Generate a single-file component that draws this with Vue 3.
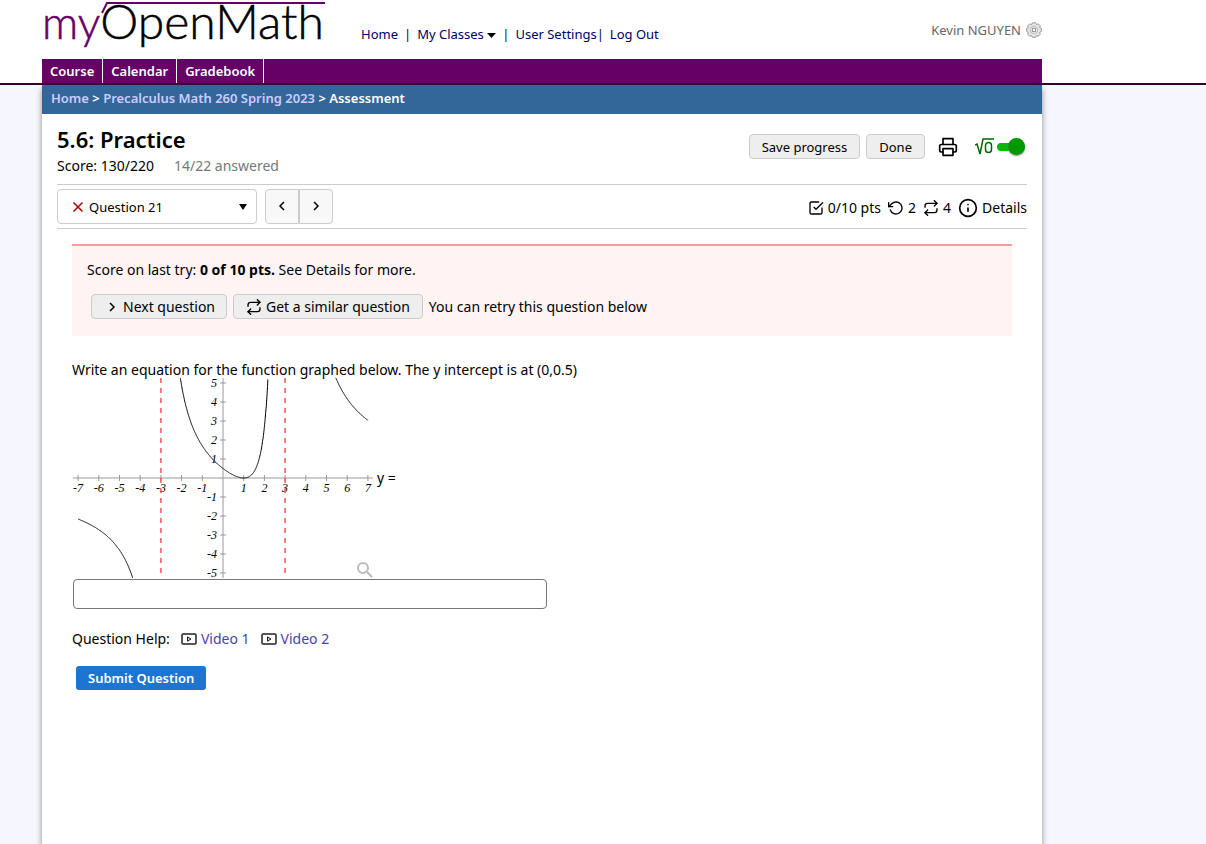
<script setup>
import { ref } from 'vue'

const tabs = ['Course', 'Calendar', 'Gradebook']
const question = ref('Question 21')
const answer = ref('')
const mathInput = ref(true)

const W = 300
const H = 200
const ux = 20.7
const uy = 19
const sx = (x) => W / 2 + x * ux
const sy = (y) => H / 2 - y * uy
const f = (x) => (13.5 * (x - 1) ** 2) / ((x + 3) * (x - 3) ** 2)

function trace(from, to) {
  const pts = []
  for (let x = from; x <= to + 0.001; x += 0.01) {
    const y = f(x)
    if (Math.abs(y) < 5.28) pts.push(`${sx(x).toFixed(1)},${sy(y).toFixed(1)}`)
  }
  return pts.join(' ')
}
const curves = [trace(-7, -3.1), trace(-2.9, 2.9), trace(3.1, 7)]
const xTicks = [-7, -6, -5, -4, -3, -2, -1, 1, 2, 3, 4, 5, 6, 7]
const yTicks = [5, 4, 3, 2, 1, -1, -2, -3, -4, -5]
</script>

<template>
  <div class="page">
    <header class="top">
      <div class="wrap head">
        <svg class="logo" width="290" height="52" viewBox="0 0 290 52" role="img" aria-label="myOpenMath">
          <text x="0" y="39"><tspan class="my">my</tspan><tspan class="om">OpenMath</tspan></text>
          <path d="M60 13 L65 3 H283" fill="none" stroke="#606" stroke-width="2" />
        </svg>
        <nav class="links" aria-label="Site">
          <a href="#">Home</a><span>|</span>
          <a href="#">My Classes <svg width="9" height="5" viewBox="0 0 9 5"><path d="M0 0h9L4.500 5z" fill="#000" /></svg></a><span>|</span>
          <a href="#">User Settings</a><span class="tight">|</span>
          <a href="#">Log Out</a>
        </nav>
        <div class="user">
          <span>Kevin NGUYEN</span>
          <svg width="16" height="16" viewBox="0 0 16 16" fill="none" stroke="#999">
            <path d="M6.500.8h3l.8 1.700 2-.6 1.900 1.900-.5 1.900 1.700.9v2.800l-1.700.9.5 2-1.900 1.900-2-.5-.8 1.600h-3l-.8-1.600-2 .5-1.900-1.900.5-2L.6 9.400V6.600l1.700-.9-.5-1.900 1.900-1.900 2 .6z" fill="#e6e6e6" />
            <circle cx="8" cy="8" r="3.800" stroke="#bbb" />
            <rect x="6.500" y="6.500" width="3" height="3" fill="#fff" />
          </svg>
        </div>
      </div>
      <nav class="wrap tabs" aria-label="Course"><a v-for="t in tabs" :key="t" href="#">{{ t }}</a></nav>
    </header>

    <main class="wrap body">
      <nav class="crumbs" aria-label="Breadcrumb">
        <a href="#">Home</a> &gt; <a href="#">Precalculus Math 260 Spring 2023</a> &gt; <span>Assessment</span>
      </nav>

      <div class="content">
        <section class="title">
          <div>
            <h1>5.6: Practice</h1>
            <p class="score"><span>Score: 130/220</span><span class="dim">14/22 answered</span></p>
          </div>
          <div class="tools">
            <button class="btn">Save progress</button>
            <button class="btn">Done</button>
            <button class="plain print" aria-label="Print">
              <svg width="20" height="20" viewBox="0 0 24 24" class="ico"><path d="M6 9V2h12v7M6 18H4a2 2 0 0 1-2-2v-5a2 2 0 0 1 2-2h16a2 2 0 0 1 2 2v5a2 2 0 0 1-2 2h-2" /><path d="M6 14h12v8H6z" /></svg>
            </button>
            <label class="toggle">
              <svg width="19" height="18" viewBox="0 0 19 18" fill="none" stroke="#060" stroke-width="1.500"><path d="M0 7l2-1 3 10L8 1h11" /><rect x="10.500" y="4.500" width="6" height="10" rx="3" /></svg>
              <input v-model="mathInput" type="checkbox" aria-label="Equation editor" />
              <span class="track"></span>
            </label>
          </div>
        </section>

        <section class="bar">
          <div class="pick">
            <button class="select" aria-haspopup="listbox">
              <svg width="12" height="12" viewBox="0 0 12 12" stroke="#a00" stroke-width="1.500"><path d="M1.500 1.500l9 9M10.500 1.500l-9 9" /></svg>
              <span>{{ question }}</span>
              <svg class="caret" width="8" height="6" viewBox="0 0 8 6"><path d="M0 0h8L4 6z" fill="#000" /></svg>
            </button>
            <div class="pager">
              <button aria-label="Previous question"><svg width="8" height="12" viewBox="0 0 8 12" class="chev"><path d="M6 2L2 6l4 4" /></svg></button>
              <button aria-label="Next question"><svg width="8" height="12" viewBox="0 0 8 12" class="chev"><path d="M2 2l4 4-4 4" /></svg></button>
            </div>
          </div>
          <div class="stats">
            <span><svg width="16" height="16" viewBox="0 0 24 24" class="ico"><path d="M9 11l3 3L22 4" /><path d="M21 12v7a2 2 0 0 1-2 2H5a2 2 0 0 1-2-2V5a2 2 0 0 1 2-2h11" /></svg>0/10 pts</span>
            <span><svg width="16" height="16" viewBox="0 0 24 24" class="ico"><path d="M1 4v6h6" /><path d="M3.500 15a9 9 0 1 0 2.100-9.400L1 10" /></svg>2</span>
            <span><svg width="16" height="16" viewBox="0 0 24 24" class="ico"><path d="M17 1l4 4-4 4" /><path d="M3 11V9a4 4 0 0 1 4-4h14M7 23l-4-4 4-4" /><path d="M21 13v2a4 4 0 0 1-4 4H3" /></svg>4</span>
            <button class="plain details"><svg width="20" height="20" viewBox="0 0 24 24" class="ico"><circle cx="12" cy="12" r="10" /><path d="M12 16v-4M12 8v.1" /></svg>Details</button>
          </div>
        </section>

        <section class="result">
          <p>Score on last try: <strong>0 of 10 pts.</strong> See Details for more.</p>
          <div class="retry">
            <button class="btn next"><svg width="8" height="12" viewBox="0 0 8 12" class="chev"><path d="M2 2l4 4-4 4" /></svg>Next question</button>
            <button class="btn again"><svg width="16" height="16" viewBox="0 0 24 24" class="ico"><path d="M17 1l4 4-4 4" /><path d="M3 11V9a4 4 0 0 1 4-4h14M7 23l-4-4 4-4" /><path d="M21 13v2a4 4 0 0 1-4 4H3" /></svg>Get a similar question</button>
            <span>You can retry this question below</span>
          </div>
        </section>

        <section class="question">
          <p>Write an equation for the function graphed below. The y intercept is at (0,0.5)</p>
          <div class="figure">
            <svg class="graph" :width="W" :height="H" :viewBox="`0 0 ${W} ${H}`" role="img" aria-label="Graph of a rational function">
              <g class="axis">
                <path :d="`M0 100H${W}M150 0V${H}`" />
                <line v-for="x in xTicks" :key="x" :x1="sx(x)" :x2="sx(x)" y1="97" y2="103" />
                <line v-for="y in yTicks" :key="y" x1="147" x2="153" :y1="sy(y)" :y2="sy(y)" />
              </g>
              <text v-for="x in xTicks" :key="'x' + x" :x="sx(x)" y="114" text-anchor="middle">{{ x }}</text>
              <text v-for="y in yTicks" :key="'y' + y" x="144" :y="sy(y) + 4" text-anchor="end">{{ y }}</text>
              <line v-for="x in [-3, 3]" :key="'a' + x" class="asym" :x1="sx(x)" :x2="sx(x)" y1="0" y2="195" />
              <polyline v-for="c in curves" :key="c" :points="c" class="curve" />
              <g class="lens"><circle cx="290" cy="190" r="5" /><path d="M294 194l5 5" /></g>
            </svg>
            <label for="answer">y =</label>
          </div>
          <input id="answer" v-model="answer" type="text" class="answer" />
          <div class="help">
            <span>Question Help:</span>
            <a v-for="n in 2" :key="n" href="#"><svg width="16" height="12" viewBox="0 0 16 12"><rect x="1" y="1" width="14" height="10" rx="1" fill="none" stroke="#222" stroke-width="1.500" /><path d="M6.500 3.800v4.400L10 6z" fill="#ccc" stroke="#222" /></svg>Video {{ n }}</a>
          </div>
          <button class="submit">Submit Question</button>
        </section>
      </div>
    </main>
  </div>
</template>

<style>
html, body, #app { height: 100%; }
body { margin: 0; background: #f6f6ff; }
</style>

<style scoped>
* { box-sizing: border-box; }
.page { min-height: 100%; display: flex; flex-direction: column; overflow: hidden; font: 13px/20px "Noto Sans", "Open Sans", sans-serif; color: #000; }
p, h1 { margin: 0; }
a { text-decoration: none; }
button { font: inherit; color: inherit; cursor: pointer; }
.wrap { width: calc(100% - 84px); max-width: 1000px; margin-left: 42px; }
.ico { fill: none; stroke: currentColor; stroke-width: 2; stroke-linecap: round; stroke-linejoin: round; }
.chev { fill: none; stroke: #000; stroke-width: 1.5; }
.plain { border: 0; background: none; padding: 0; display: flex; align-items: center; }

.top { background: #fff; border-bottom: 2px solid #303; }
.head { height: 59px; display: flex; align-items: flex-start; }
.logo { flex: none; overflow: visible; font: 300 45px Lato, sans-serif; }
.logo .my { fill: #606; stroke: #606; stroke-width: 0.5; }
.logo .om { font-size: 48px; fill: #000; stroke: #000; stroke-width: 0.5; }
.links { display: flex; gap: 6px; padding: 24px 0 0 29px; }
.links a, .links span { color: #006; white-space: nowrap; }
.links svg { vertical-align: middle; }
.links .tight { margin-left: -6px; }
.user { margin-left: auto; padding-top: 20px; display: flex; gap: 5px; align-items: center; color: #666; }

.tabs { display: flex; background: #606; height: 24px; }
.tabs a { color: #fff; font-weight: 600; line-height: 24px; padding: 0 8px; border-right: 1px solid #fff; }

.body { flex: 1; background: #fff; box-shadow: 0 4px 6px #888; }
.crumbs { height: 29px; line-height: 26px; padding-left: 9px; background: #369; color: #fff; font-weight: 600; }
.crumbs a { color: #ccf; }
.content { padding: 11px 15px; }

.title { display: flex; justify-content: space-between; height: 60px; border-bottom: 1px solid #ccc; }
h1 { font-size: 22px; line-height: 28px; font-weight: 600; }
.score { display: flex; gap: 20px; line-height: 26px; font-size: 14px; }
.dim { color: #777; }
.tools { display: flex; align-items: center; gap: 6px; height: 25px; margin: 9px 2px 0 0; }
.btn { height: 25px; padding: 0 12px; background: #eee; border: 1px solid #ccc; border-radius: 4px; display: flex; align-items: center; white-space: nowrap; }
.print { margin: 0 11px 0 7px; }
.toggle { display: flex; align-items: center; gap: 3px; position: relative; }
.toggle input { appearance: none; position: absolute; inset: 0; margin: 0; opacity: 0; }
.track { width: 28px; height: 8px; border-radius: 4px; background: #0b0; display: flex; align-items: center; justify-content: flex-end; }
.track::after { content: ""; width: 17px; height: 17px; border-radius: 50%; background: #090; box-shadow: 0 1px 2px #888; }

.bar { display: flex; justify-content: space-between; align-items: center; height: 44px; border-bottom: 1px solid #ccc; }
.pick { display: flex; gap: 8px; }
.select { width: 200px; height: 35px; padding: 0 9px 0 14px; display: flex; align-items: center; gap: 5px; background: #fff; border: 1px solid #ccc; border-radius: 4px; }
.caret { margin-left: auto; }
.pager { display: flex; }
.pager button { width: 34px; height: 35px; padding: 0; background: #f8f8f8; border: 1px solid #ccc; border-radius: 4px 0 0 4px; }
.pager button + button { border-radius: 0 4px 4px 0; }
.stats { display: flex; gap: 7px; align-items: center; font-size: 14px; padding-top: 2px; }
.stats > * { display: flex; gap: 4px; align-items: center; }

.result { margin: 15px 15px 0; height: 92px; padding: 14px 15px 0; background: #fff3f3; border-top: 2px solid #f99; font-size: 14px; }
.retry { display: flex; align-items: center; gap: 6px; margin: 14px 0 0 4px; }
.next { padding: 0 11px 0 16px; gap: 7px; }
.again { gap: 4px; }

.question { padding: 24px 15px 0; font-size: 14px; }
.question p { line-height: 20px; }
.figure { display: flex; align-items: center; gap: 4px; margin: -2px 0 0 1px; }
.graph { font: italic 12px "Liberation Serif", serif; flex: none; overflow: visible; }
.axis { stroke: #999; stroke-width: 1; fill: none; }
.asym { stroke: #f55; stroke-width: 1.5; stroke-dasharray: 5 5; }
.curve { fill: none; stroke: #000; stroke-width: 1; }
.lens { fill: none; stroke: #bbb; stroke-width: 2; }
.answer { display: block; width: 100%; max-width: 474px; height: 30px; margin: 1px 0 0 1px; border: 1px solid #777; border-radius: 4px; background: #fff; padding: 0 8px; font: inherit; }
.help { display: flex; gap: 11px; margin-top: 20px; }
.help a { color: #44a; display: flex; align-items: center; gap: 4px; }
.submit { margin: 17px 0 0 4px; height: 24px; padding: 0 12px; background: #1e74d1; color: #fff; border: 0; border-radius: 3px; font-size: 13px; font-weight: 600; line-height: 24px; }
</style>
